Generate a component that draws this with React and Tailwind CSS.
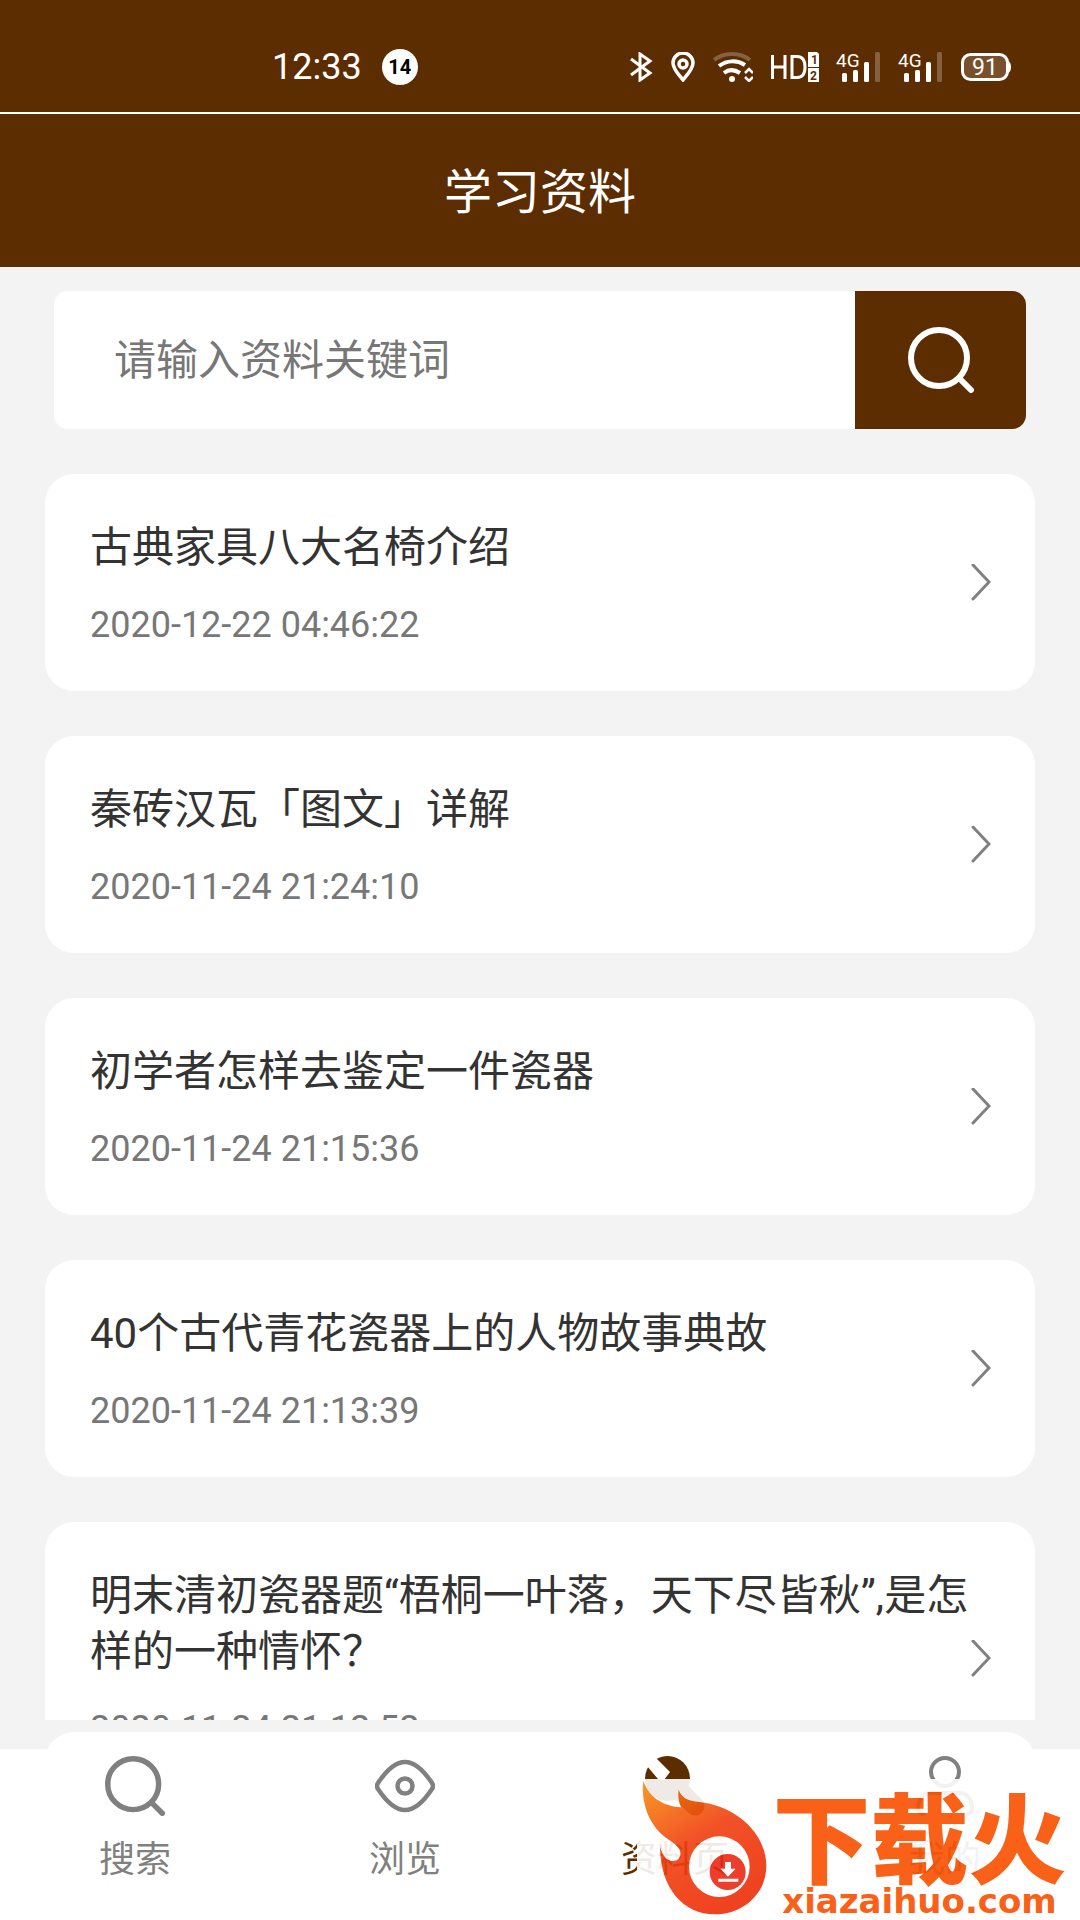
import { useState } from 'react';

const ARTICLES = [
  { id: 1, title: '古典家具八大名椅介绍', date: '2020-12-22 04:46:22' },
  { id: 2, title: '秦砖汉瓦「图文」详解', date: '2020-11-24 21:24:10' },
  { id: 3, title: '初学者怎样去鉴定一件瓷器', date: '2020-11-24 21:15:36' },
  { id: 4, title: '40个古代青花瓷器上的人物故事典故', date: '2020-11-24 21:13:39' },
  { id: 5, title: '明末清初瓷器题“梧桐一叶落，天下尽皆秋”,是怎样的一种情怀？', date: '2020-11-24 21:12:52' },
];

function SearchIcon({ className }) {
  return (
    <svg viewBox="0 0 66 66" fill="none" stroke="currentColor" strokeWidth="6" strokeLinecap="round" className={className}>
      <circle cx="31" cy="31" r="28" />
      <path d="M51 51l12 12" />
    </svg>
  );
}

function EyeIcon({ className }) {
  return (
    <svg viewBox="0 0 60 60" fill="none" stroke="currentColor" strokeWidth="4.5" className={className}>
      <path d="M3 27C9 18 19 6 30 6s21 12 27 21q2 3 0 6C51 42 41 54 30 54S9 42 3 33q-2-3 0-6z" />
      <circle cx="30" cy="30" r="7.5" />
    </svg>
  );
}

function WrenchIcon({ className }) {
  return (
    <svg viewBox="0 0 60 60" fill="currentColor" className={className}>
      <circle cx="22.5" cy="22.5" r="22.5" />
      <path d="M30 30l20 20" stroke="currentColor" strokeWidth="19" strokeLinecap="round" />
      <path d="M2 10l9-8 14 14-6 8-6-1z" fill="#fff" />
    </svg>
  );
}

function UserIcon({ className }) {
  return (
    <svg viewBox="0 0 60 60" fill="none" stroke="currentColor" strokeWidth="4" strokeLinecap="round" className={className}>
      <circle cx="30" cy="16" r="14" />
      <path d="M8 58q-5-1-5-6C3 42 9 37 16 37h28c7 0 13 5 13 15q0 5-5 6" />
    </svg>
  );
}

function SignalIcon() {
  return (
    <svg viewBox="0 0 44 30" fill="#fff" className="h-[30px] w-11 overflow-visible">
      <text x="-1" y="15" fontSize="19" fontFamily="Roboto, sans-serif">4G</text>
      <rect x="5" y="21" width="5" height="9" rx="1.5" />
      <rect x="16" y="18" width="5" height="12" rx="1.5" />
      <rect x="27" y="10" width="5" height="20" rx="1.5" />
      <rect x="38" y="0" width="5" height="30" rx="1.5" opacity="0.25" />
    </svg>
  );
}

function StatusBar() {
  return (
    <div className="flex h-[114px] items-center justify-between border-b-2 border-white pt-[22px] pr-[69px] pl-[272px] text-white">
      <div className="flex items-center gap-5">
        <span className="text-4xl">12:33</span>
        <span className="flex size-9 items-center justify-center rounded-full bg-white text-[20px] font-bold text-black">14</span>
      </div>
      <div className="flex items-center gap-[18px]">
        <svg viewBox="0 0 24 30" fill="none" stroke="#fff" strokeWidth="3" className="h-[30px] w-6">
          <path d="M2 7l19 14-10 7V2l10 7L2 23" />
        </svg>
        <svg viewBox="0 0 24 30" fill="none" stroke="#fff" strokeWidth="3.5" className="h-[30px] w-6">
          <path d="M12 28C8 23 2 17 2 11a10 10 0 0 1 20 0c0 6-6 12-10 17z" />
          <circle cx="12" cy="12" r="4" />
        </svg>
        <svg viewBox="0 0 40 30" fill="none" stroke="#fff" strokeWidth="4" className="h-[30px] w-10">
          <path d="M1 8C11 0 27 0 37 8" opacity="0.25" />
          <path d="M6 14c8-6 18-6 26-1M11 21c5-4 10-4 16 0" />
          <circle cx="19" cy="27" r="3" fill="#fff" stroke="none" />
          <path d="M32 21l4-4 4 4M32 25l4 4 4-4" strokeWidth="2.5" />
        </svg>
        <svg viewBox="0 0 48 30" fill="#fff" className="h-[30px] w-12">
          <path d="M1.5 3v24M14 3v24M1.5 15H14M21 4.5v21h5q8 0 8-10.5t-8-10.5z" fill="none" stroke="#fff" strokeWidth="3" />
          <path d="M37 0h9l2 2v13H37zM37 16h11v14H37z" />
          <text x="40" y="12" fontSize="12" fontWeight="700" fill="#5c2d00" fontFamily="Roboto, sans-serif">1</text>
          <text x="39" y="28" fontSize="12" fontWeight="700" fill="#5c2d00" fontFamily="Roboto, sans-serif">2</text>
        </svg>
        <SignalIcon />
        <SignalIcon />
        <svg viewBox="0 0 50 30" className="h-[30px] w-[50px]">
          <rect x="1.5" y="2.5" width="45" height="25" rx="8" fill="#7a4f2b" stroke="#fff" strokeWidth="3" />
          <path d="M47 9q3 1 3 6t-3 6z" fill="#fff" />
          <text x="24" y="23" fontSize="23" textAnchor="middle" fill="#fff" fontFamily="Roboto, sans-serif">91</text>
        </svg>
      </div>
    </div>
  );
}

function ArticleCard({ title, date }) {
  return (
    <li>
      <a href="#article" className="flex items-center justify-between rounded-[29px] bg-white pt-[46px] pr-11 pb-[45px] pl-[45px]">
        <div className="min-w-0 flex-1">
          <h2 className="text-[42px] leading-[56px] text-[#333]">{title}</h2>
          <time className="mt-7 block text-4xl leading-[42px] text-[#777]">{date}</time>
        </div>
        <svg viewBox="0 0 20 38" fill="none" stroke="#808080" strokeWidth="3" strokeLinecap="round" className="h-[38px] w-5 shrink-0">
          <path d="M2 1l16 17L2 35" />
        </svg>
      </a>
    </li>
  );
}

const TABS = [
  { label: '搜索', Icon: SearchIcon },
  { label: '浏览', Icon: EyeIcon },
  { label: '资料页', Icon: WrenchIcon },
  { label: '我的', Icon: UserIcon },
];

function Watermark() {
  return (
    <div className="pointer-events-none absolute right-0 bottom-0 flex h-[141px] w-[443px] bg-white text-[#f95000] opacity-90">
      <svg viewBox="51 147 390 423" className="h-[141px] w-[130px] shrink-0">
        <defs>
          <linearGradient id="flame" x1="0" y1="0" x2="0.6" y2="1">
            <stop offset="0" stopColor="#f79010" />
            <stop offset="0.5" stopColor="#f14010" />
            <stop offset="1" stopColor="#ee2e08" />
          </linearGradient>
        </defs>
        <path
          d="M70 153C85 195 120 228 183 232C176 215 173 198 176 179C184 202 202 213 238 216C340 225 439 305 439 408C439 490 370 553 285 553C190 553 121 475 120 350C127 377 140 393 160 393C178 393 188 373 176 355C166 338 143 330 120 308C77 265 63 200 70 153Z"
          fill="url(#flame)"
        />
        <circle cx="298" cy="410" r="91" fill="#fff" />
        <circle cx="323" cy="426" r="54" fill="#ec2a16" />
        <path d="M315 396h18v20h14l-23 24-23-24h14zM295 446h60v9h-60z" fill="#fff" />
      </svg>
      <div className="flex flex-1 flex-col items-center pt-5 pr-2">
        <span className="text-[98px] leading-[88px] font-black whitespace-nowrap">下载火</span>
        <span className="font-['DejaVu_Sans',sans-serif] text-[34px] leading-[28px] font-bold">xiazaihuo.com</span>
      </div>
    </div>
  );
}

export default function App() {
  const [keyword, setKeyword] = useState('');
  const [active, setActive] = useState('资料页');

  return (
    <div className="relative flex h-screen flex-col overflow-hidden bg-[#f3f3f3] font-[Roboto,'Noto_Sans_CJK_SC',sans-serif]">
      <header className="shrink-0 bg-[#5c2d00]">
        <StatusBar />
        <h1 className="pt-[50px] pb-[46px] text-center text-5xl leading-[57px] text-white">学习资料</h1>
      </header>

      <main className="min-h-0 flex-1 overflow-hidden">
        <form onSubmit={(e) => e.preventDefault()} className="mx-[54px] mt-6 flex h-[138px] overflow-hidden rounded-[14px] bg-white">
          <input
            type="text"
            aria-label="请输入资料关键词"
            placeholder="请输入资料关键词"
            value={keyword}
            onChange={(e) => setKeyword(e.target.value)}
            className="min-w-0 flex-1 px-[60px] text-[42px] text-[#333] outline-none placeholder:text-[#777]"
          />
          <button type="submit" aria-label="搜索" className="flex w-[171px] items-center justify-center bg-[#5c2d00] text-white">
            <SearchIcon className="size-[66px]" />
          </button>
        </form>

        <ul className="mx-[45px] mt-[45px] flex flex-col gap-[45px]">
          {ARTICLES.map((a) => (
            <ArticleCard key={a.id} title={a.title} date={a.date} />
          ))}
        </ul>
      </main>

      {/* top edge of the next card, showing above the tab bar */}
      <div className="h-[29px] shrink-0 overflow-hidden px-[45px] pt-3">
        <div className="h-20 rounded-[29px] bg-white" />
      </div>

      <nav className="grid h-[171px] shrink-0 grid-cols-4 bg-white">
        {TABS.map(({ label, Icon }) => (
          <button
            key={label}
            type="button"
            onClick={() => setActive(label)}
            className={`flex flex-col items-center gap-[18px] pt-[7px] text-4xl leading-[52px] ${active === label ? 'text-[#5c2d00]' : 'text-[#808080]'}`}
          >
            <Icon className="size-[60px]" />
            <span>{label}</span>
          </button>
        ))}
      </nav>

      <Watermark />
    </div>
  );
}
